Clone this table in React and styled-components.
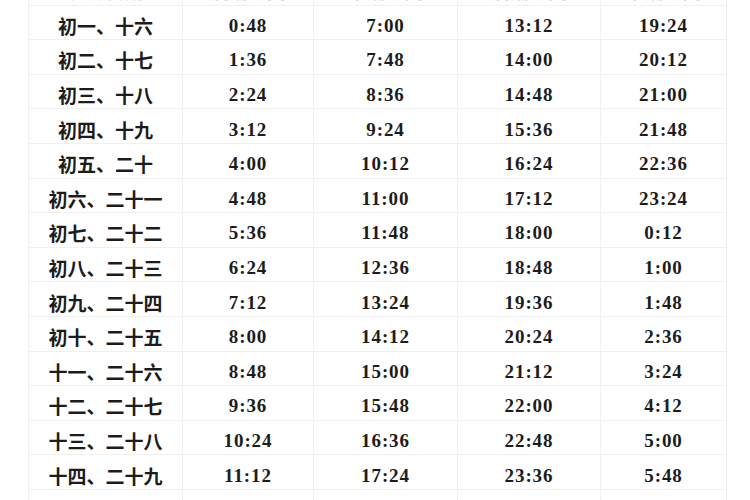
import React from 'react';
import styled, { createGlobalStyle } from 'styled-components';

const GlobalStyle = createGlobalStyle`
  html, body {
    margin: 0;
    padding: 0;
    background: #ffffff;
    width: 750px;
    height: 500px;
    overflow: hidden;
  }
`;

const Page = styled.div`
  width: 750px;
  height: 500px;
  overflow: hidden;
  padding-left: 28px;
  box-sizing: border-box;
`;

const Table = styled.table`
  margin-top: -30px;
  width: 698px;
  border-collapse: collapse;
  table-layout: fixed;
`;

const Row = styled.tr`
  height: 34.6px;
`;

const Cell = styled.td`
  border: 1px solid #f0f0f0;
  padding: 7px 0 0;
  text-align: center;
  vertical-align: middle;
  color: ${(p) => (p.$head ? '#dcdcdc' : '#1c1c1c')};
  font-weight: bold;
  font-size: 19px;
  line-height: 26px;
  font-family: ${(p) =>
    p.$cn
      ? '"Noto Sans CJK SC", sans-serif'
      : '"Liberation Serif", "Noto Sans CJK SC", serif'};
  letter-spacing: ${(p) => (p.$cn ? '0' : '0.9px')};
  white-space: nowrap;
`;

const widths = [154, 131, 144, 143, 126];

const rows = [
  ['初一、十六', '0:48', '7:00', '13:12', '19:24'],
  ['初二、十七', '1:36', '7:48', '14:00', '20:12'],
  ['初三、十八', '2:24', '8:36', '14:48', '21:00'],
  ['初四、十九', '3:12', '9:24', '15:36', '21:48'],
  ['初五、二十', '4:00', '10:12', '16:24', '22:36'],
  ['初六、二十一', '4:48', '11:00', '17:12', '23:24'],
  ['初七、二十二', '5:36', '11:48', '18:00', '0:12'],
  ['初八、二十三', '6:24', '12:36', '18:48', '1:00'],
  ['初九、二十四', '7:12', '13:24', '19:36', '1:48'],
  ['初十、二十五', '8:00', '14:12', '20:24', '2:36'],
  ['十一、二十六', '8:48', '15:00', '21:12', '3:24'],
  ['十二、二十七', '9:36', '15:48', '22:00', '4:12'],
  ['十三、二十八', '10:24', '16:36', '22:48', '5:00'],
  ['十四、二十九', '11:12', '17:24', '23:36', '5:48'],
  ['十五、三十', '12:00', '18:12', '0:24', '6:36'],
];

const head = ['农历日期', '满潮时间', '干潮时间', '满潮时间', '干潮时间'];

export default function App() {
  return (
    <>
      <GlobalStyle />
      <Page>
        <Table>
          <colgroup>
            {widths.map((w, i) => (
              <col key={i} style={{ width: w }} />
            ))}
          </colgroup>
          <thead>
            <Row>
              {head.map((h, i) => (
                <Cell key={i} $head $cn>
                  {h}
                </Cell>
              ))}
            </Row>
          </thead>
          <tbody>
            {rows.map((r, i) => (
              <Row key={i}>
                {r.map((c, j) => (
                  <Cell key={j} $cn={j === 0}>
                    {c}
                  </Cell>
                ))}
              </Row>
            ))}
          </tbody>
        </Table>
      </Page>
    </>
  );
}
